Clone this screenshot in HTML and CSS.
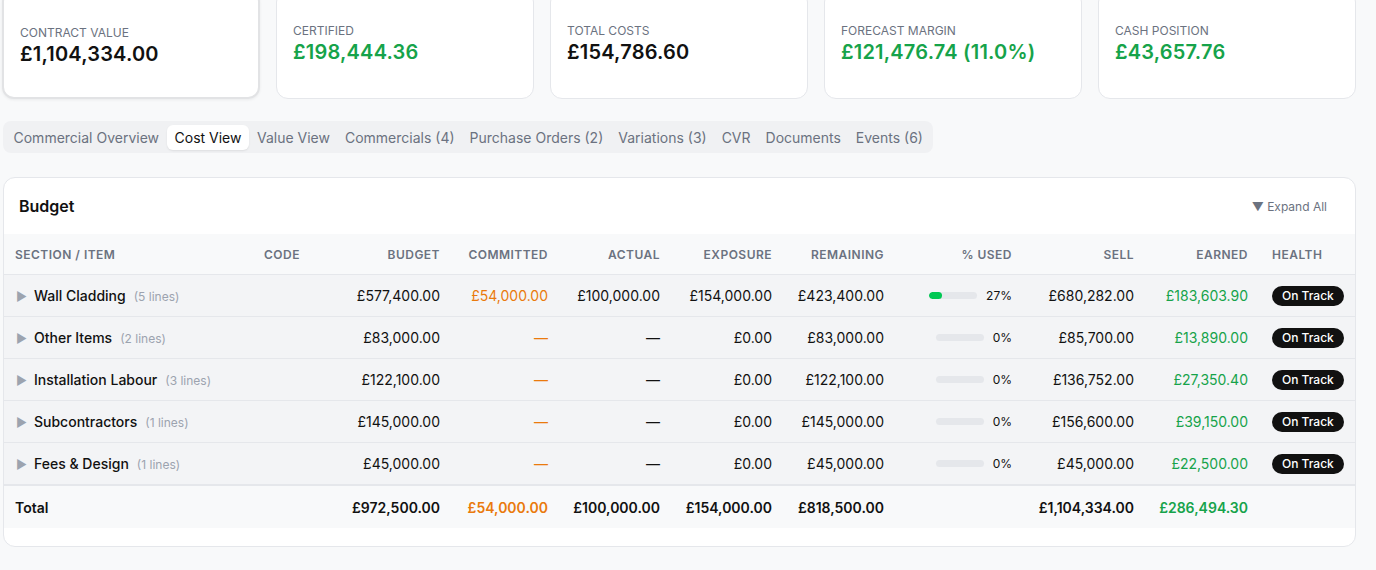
FILE: index.html
```html
<!DOCTYPE html>
<html lang="en">
<head>
    <meta charset="UTF-8">
    <meta name="viewport" content="width=device-width, initial-scale=1.0">
    <title>Cost View</title>
    <link rel="stylesheet" href="styles.css">
</head>
<body>

<div class="page">
    <div class="summary">
        <div class="stat stat-active">
            <p class="stat-label">Contract Value</p>
            <p class="stat-value">£1,104,334.00</p>
        </div>
        <div class="stat">
            <p class="stat-label">Certified</p>
            <p class="stat-value green">£198,444.36</p>
        </div>
        <div class="stat">
            <p class="stat-label">Total Costs</p>
            <p class="stat-value">£154,786.60</p>
        </div>
        <div class="stat">
            <p class="stat-label">Forecast Margin</p>
            <p class="stat-value green">£121,476.74 (11.0%)</p>
        </div>
        <div class="stat">
            <p class="stat-label">Cash Position</p>
            <p class="stat-value green">£43,657.76</p>
        </div>
    </div>

    <div class="tabs">
        <button class="tab">Commercial Overview</button>
        <button class="tab active">Cost View</button>
        <button class="tab">Value View</button>
        <button class="tab">Commercials (4)</button>
        <button class="tab">Purchase Orders (2)</button>
        <button class="tab">Variations (3)</button>
        <button class="tab">CVR</button>
        <button class="tab">Documents</button>
        <button class="tab">Events (6)</button>
    </div>

    <div class="panel">
        <div class="panel-header">
            <h2>Budget</h2>
            <button class="expand-btn">▼ Expand All</button>
        </div>
        <table class="budget">
            <colgroup>
                <col style="width:248px">
                <col style="width:88px">
                <col style="width:112px">
                <col style="width:108px">
                <col style="width:112px">
                <col style="width:112px">
                <col style="width:112px">
                <col style="width:128px">
                <col style="width:122px">
                <col style="width:114px">
                <col>
            </colgroup>
            <thead>
                <tr>
                    <th>Section / Item</th>
                    <th>Code</th>
                    <th class="num">Budget</th>
                    <th class="num">Committed</th>
                    <th class="num">Actual</th>
                    <th class="num">Exposure</th>
                    <th class="num">Remaining</th>
                    <th class="num">% Used</th>
                    <th class="num">Sell</th>
                    <th class="num">Earned</th>
                    <th>Health</th>
                </tr>
            </thead>
            <tbody>
                <tr>
                    <td><span class="caret">▶</span><span class="sec-name">Wall Cladding</span><span class="sec-lines">(5 lines)</span></td>
                    <td></td>
                    <td class="num">£577,400.00</td>
                    <td class="num orange">£54,000.00</td>
                    <td class="num">£100,000.00</td>
                    <td class="num">£154,000.00</td>
                    <td class="num">£423,400.00</td>
                    <td class="num"><div class="used"><div class="bar"><div class="fill" style="width:27%"></div></div><span>27%</span></div></td>
                    <td class="num">£680,282.00</td>
                    <td class="num green">£183,603.90</td>
                    <td><span class="badge">On Track</span></td>
                </tr>
                <tr>
                    <td><span class="caret">▶</span><span class="sec-name">Other Items</span><span class="sec-lines">(2 lines)</span></td>
                    <td></td>
                    <td class="num">£83,000.00</td>
                    <td class="num orange">—</td>
                    <td class="num">—</td>
                    <td class="num">£0.00</td>
                    <td class="num">£83,000.00</td>
                    <td class="num"><div class="used"><div class="bar"><div class="fill" style="width:0%"></div></div><span>0%</span></div></td>
                    <td class="num">£85,700.00</td>
                    <td class="num green">£13,890.00</td>
                    <td><span class="badge">On Track</span></td>
                </tr>
                <tr>
                    <td><span class="caret">▶</span><span class="sec-name">Installation Labour</span><span class="sec-lines">(3 lines)</span></td>
                    <td></td>
                    <td class="num">£122,100.00</td>
                    <td class="num orange">—</td>
                    <td class="num">—</td>
                    <td class="num">£0.00</td>
                    <td class="num">£122,100.00</td>
                    <td class="num"><div class="used"><div class="bar"><div class="fill" style="width:0%"></div></div><span>0%</span></div></td>
                    <td class="num">£136,752.00</td>
                    <td class="num green">£27,350.40</td>
                    <td><span class="badge">On Track</span></td>
                </tr>
                <tr>
                    <td><span class="caret">▶</span><span class="sec-name">Subcontractors</span><span class="sec-lines">(1 lines)</span></td>
                    <td></td>
                    <td class="num">£145,000.00</td>
                    <td class="num orange">—</td>
                    <td class="num">—</td>
                    <td class="num">£0.00</td>
                    <td class="num">£145,000.00</td>
                    <td class="num"><div class="used"><div class="bar"><div class="fill" style="width:0%"></div></div><span>0%</span></div></td>
                    <td class="num">£156,600.00</td>
                    <td class="num green">£39,150.00</td>
                    <td><span class="badge">On Track</span></td>
                </tr>
                <tr>
                    <td><span class="caret">▶</span><span class="sec-name">Fees &amp; Design</span><span class="sec-lines">(1 lines)</span></td>
                    <td></td>
                    <td class="num">£45,000.00</td>
                    <td class="num orange">—</td>
                    <td class="num">—</td>
                    <td class="num">£0.00</td>
                    <td class="num">£45,000.00</td>
                    <td class="num"><div class="used"><div class="bar"><div class="fill" style="width:0%"></div></div><span>0%</span></div></td>
                    <td class="num">£45,000.00</td>
                    <td class="num green">£22,500.00</td>
                    <td><span class="badge">On Track</span></td>
                </tr>
            </tbody>
            <tfoot>
                <tr>
                    <td>Total</td>
                    <td></td>
                    <td class="num">£972,500.00</td>
                    <td class="num orange">£54,000.00</td>
                    <td class="num">£100,000.00</td>
                    <td class="num">£154,000.00</td>
                    <td class="num">£818,500.00</td>
                    <td></td>
                    <td class="num">£1,104,334.00</td>
                    <td class="num green">£286,494.30</td>
                    <td></td>
                </tr>
            </tfoot>
        </table>
    </div>
</div>

</body>
</html>
```

FILE: styles.css
```css
body {
    font-family: Inter, "Liberation Sans", sans-serif;
    margin: 0;
    padding: 0;
    background-color: #f8f9fa;
    color: #111111;
}
p {
    margin: 0;
}
.page {
    padding: 0 20px 0 2px;
    margin-top: -10px;
}
.summary {
    display: grid;
    grid-template-columns: repeat(5, 1fr);
    gap: 16px;
}
.stat {
    background-color: #ffffff;
    border: 1px solid #e5e7eb;
    border-radius: 12px;
    padding: 32px 16px 30px;
}
.stat-active {
    border: 2px solid #e2e3e5;
    padding: 33px 16px 29px;
    box-shadow: 0 1px 3px rgba(0, 0, 0, 0.06);
}
.stat-label {
    font-size: 12px;
    line-height: 16px;
    color: #6b7280;
    text-transform: uppercase;
}
.stat-value {
    font-size: 20px;
    line-height: 28px;
    font-weight: 600;
    letter-spacing: 0.01em;
    margin-top: -1px;
}
.green {
    color: #16a34a;
}
.orange {
    color: #ea7a0c;
}
.tabs {
    display: inline-flex;
    margin: 22px 0 0 1px;
    padding: 4px 3px 3px;
    background-color: #f0f1f3;
    border-radius: 8px;
}
.tab {
    font-family: inherit;
    font-size: 14px;
    line-height: 21px;
    padding: 2px 7.5px;
    border: none;
    background: none;
    color: #6b7280;
    border-radius: 6px;
    cursor: pointer;
}
.tab.active {
    background-color: #ffffff;
    color: #111111;
    box-shadow: 0 1px 2px rgba(0, 0, 0, 0.08);
    padding: 2px 8px;
}
.panel {
    margin: 24px 0 0 1px;
    background-color: #ffffff;
    border: 1px solid #e5e7eb;
    border-radius: 12px;
    padding-bottom: 18px;
    overflow: hidden;
}
.panel-header {
    display: flex;
    justify-content: space-between;
    align-items: center;
    padding: 16px 16px 16px 15px;
}
.panel-header h2 {
    margin: 0;
    font-size: 16px;
    line-height: 24px;
    font-weight: 600;
}
.expand-btn {
    font-family: inherit;
    font-size: 12px;
    color: #6b7280;
    background: none;
    border: none;
    padding: 4px 12px;
    cursor: pointer;
}
.budget {
    width: 100%;
    border-collapse: collapse;
    table-layout: fixed;
    font-size: 14px;
}
.budget th {
    background-color: #f8f9fa;
    font-size: 12px;
    font-weight: 600;
    color: #6b7280;
    text-transform: uppercase;
    letter-spacing: 0.04em;
    text-align: left;
    height: 40px;
    padding: 0 12px;
    border-bottom: 1px solid #e5e7eb;
}
.budget th:first-child,
.budget td:first-child {
    padding-left: 11px;
}
.budget td {
    height: 41px;
    padding: 0 12px;
    white-space: nowrap;
    border-bottom: 1px solid #e5e7eb;
}
.budget tbody tr {
    background-color: #f3f4f6;
}
.budget tbody tr:last-child td {
    border-bottom: none;
}
.budget .num {
    text-align: right;
}
.caret {
    color: #9ca3af;
    font-size: 12px;
    margin: 0 7px 0 1px;
}
.sec-name {
    font-weight: 500;
}
.sec-lines {
    font-size: 12px;
    color: #9ca3af;
    margin-left: 8px;
}
.used {
    display: flex;
    justify-content: flex-end;
    align-items: center;
    gap: 9px;
    font-size: 12px;
}
.bar {
    width: 48px;
    height: 7px;
    background-color: #e5e7eb;
    border-radius: 4px;
    overflow: hidden;
}
.fill {
    height: 100%;
    background-color: #00c853;
    border-radius: 4px;
}
.badge {
    display: inline-block;
    background-color: #111111;
    color: #ffffff;
    font-size: 12px;
    font-weight: 500;
    line-height: 20px;
    padding: 0 10px;
    border-radius: 10px;
}
.budget tfoot td {
    background-color: #f8f9fa;
    font-weight: 600;
    height: 42px;
    border-top: 2px solid #e5e7eb;
    border-bottom: none;
}
```
